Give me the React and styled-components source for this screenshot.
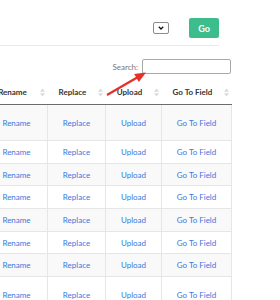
import React from "react";
import styled, { createGlobalStyle } from "styled-components";

const GlobalStyle = createGlobalStyle`
  html, body { margin: 0; padding: 0; background: #fff; overflow: hidden; }
  body { font-family: Lato, "Open Sans", Arial, sans-serif; }
`;

const Page = styled.div`
  position: relative;
  width: 280px;
  height: 300px;
  overflow: hidden;
`;

const TopBar = styled.div`
  width: 219px;
  display: flex;
  justify-content: flex-end;
  align-items: center;
  gap: 20px;
  padding: 18px 0 7px;
  border-bottom: 1px solid #e9e9e9;
`;

const SelectBox = styled.div`
  box-sizing: border-box;
  width: 16px;
  height: 12px;
  border: 1px solid #8c8c8c;
  border-radius: 2px;
  background: #fff;
  display: flex;
  align-items: center;
  justify-content: center;
`;

const GoButton = styled.button`
  box-sizing: border-box;
  width: 30px;
  height: 20px;
  border: none;
  border-radius: 2px;
  background: #3dbd8b;
  color: #fff;
  font-family: Lato, sans-serif;
  font-weight: 700;
  font-size: 9px;
  padding: 0;
`;

const SearchRow = styled.div`
  width: 231px;
  margin-top: 13px;
  display: flex;
  justify-content: flex-end;
  align-items: center;
  gap: 4px;
`;

const SearchLabel = styled.label`
  font-size: 8px;
  color: #777;
`;

const SearchInput = styled.input`
  box-sizing: border-box;
  width: 89px;
  height: 15px;
  border: 1px solid #a9a9a9;
  border-radius: 2px;
  padding: 0 3px;
  margin: 0;
  font-size: 8px;
`;

const Table = styled.table`
  margin: 6px 0 0 -15px;
  border-collapse: collapse;
  table-layout: fixed;
  width: 246px;
  font-size: 8px;
`;

const Th = styled.th`
  height: 24px;
  padding: 0 3px 0 2px;
  border-bottom: 1px solid #6b6b6b;
  font-weight: 700;
  color: #333;
`;

const HeadInner = styled.div`
  display: flex;
  align-items: center;
  gap: 2px;
`;

const HeadLabel = styled.span`
  flex: 1;
  text-align: center;
  white-space: nowrap;
`;

const Tr = styled.tr`
  background: ${(p) => (p.$striped ? "#f9f9f9" : "#fff")};
`;

const Td = styled.td`
  height: ${(p) => (p.$tall ? "35px" : "21.7px")};
  padding: 0;
  border: 1px solid #e6e6e6;
  text-align: center;
  white-space: nowrap;
`;

const Link = styled.a`
  color: #3a78e0;
  text-decoration: none;
`;

const SortIcon = () => (
  <svg width="5" height="9" viewBox="0 0 5 9" style={{ flex: "none" }}>
    <polygon points="0,3.8 2.5,0.5 5,3.8" fill="#dadada" />
    <polygon points="0,5.2 2.5,8.5 5,5.2" fill="#dadada" />
  </svg>
);

const Arrow = styled.svg`
  position: absolute;
  left: 0;
  top: 0;
  pointer-events: none;
`;

const columns = [
  { label: "Rename", width: 62 },
  { label: "Replace", width: 58 },
  { label: "Upload", width: 56 },
  { label: "Go To Field", width: 70 },
];

const rows = [true, false, false, false, false, false, false, true];

export default function App() {
  return (
    <Page>
      <GlobalStyle />
      <TopBar>
        <SelectBox>
          <svg width="6" height="4" viewBox="0 0 6 4">
            <polyline points="0.8,0.8 3,3 5.2,0.8" fill="none" stroke="#111" strokeWidth="1.3" />
          </svg>
        </SelectBox>
        <GoButton>Go</GoButton>
      </TopBar>
      <SearchRow>
        <SearchLabel>Search:</SearchLabel>
        <SearchInput type="text" />
      </SearchRow>
      <Table>
        <colgroup>
          {columns.map((c) => (
            <col key={c.label} style={{ width: c.width }} />
          ))}
        </colgroup>
        <thead>
          <tr>
            {columns.map((c) => (
              <Th key={c.label}>
                <HeadInner>
                  <HeadLabel>{c.label}</HeadLabel>
                  <SortIcon />
                </HeadInner>
              </Th>
            ))}
          </tr>
        </thead>
        <tbody>
          {rows.map((tall, i) => (
            <Tr key={i} $striped={i % 2 === 0}>
              {columns.map((c) => (
                <Td key={c.label} $tall={tall}>
                  <Link href="#">{c.label}</Link>
                </Td>
              ))}
            </Tr>
          ))}
        </tbody>
      </Table>
      <Arrow width="280" height="300" viewBox="0 0 280 300">
        <line x1="107" y1="95" x2="138" y2="77" stroke="#e5302a" strokeWidth="2.3" />
        <polygon points="146,72.5 138.8,81.9 134.2,74.1" fill="#e5302a" />
      </Arrow>
    </Page>
  );
}
